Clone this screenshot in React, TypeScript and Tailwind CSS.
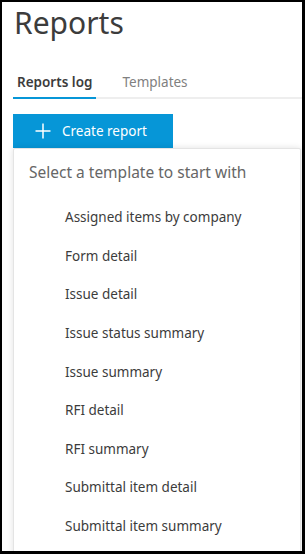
const templates = [
  "Assigned items by company",
  "Form detail",
  "Issue detail",
  "Issue status summary",
  "Issue summary",
  "RFI detail",
  "RFI summary",
  "Submittal item detail",
  "Submittal item summary",
];

const App = () => {
  return (
    <div className="w-[305px] h-[554px] overflow-hidden bg-black pl-[2px] pt-[2px] pr-[3px] pb-[3px]">
      <div className="h-full bg-white overflow-hidden font-['Noto_Sans',sans-serif]">
        {/* Title */}
        <h1 className="pl-[12px] text-[30px] leading-[41px] text-[#3c3c3c]">Reports</h1>

        {/* Tabs */}
        <div className="ml-[11px] mt-[29px] flex border-b-2 border-[#eeeeee]">
          <div className="-mb-[2px] border-b-2 border-[#0696d7] px-[4px] pb-[5px] text-[13.5px] leading-[20px] font-semibold text-[#3c3c3c]">
            Reports log
          </div>
          <div className="ml-[22px] px-[4px] pb-[5px] text-[13.5px] leading-[20px] text-[#808080]">
            Templates
          </div>
        </div>

        {/* Button */}
        <button className="ml-[11px] mt-[15px] flex h-[34px] w-[160px] items-center bg-[#0696d7] pl-[22px] text-[13.5px] text-white">
          <svg width="16" height="16" viewBox="0 0 16 16" fill="none" stroke="white" strokeWidth="1.5">
            <path d="M8 0.5v15M0.5 8h15" />
          </svg>
          <span className="ml-[11px]">Create report</span>
        </button>

        {/* Dropdown panel */}
        <div className="ml-[11px] w-[288px] h-[420px] rounded-[2px] border border-[#e4e4e4] bg-white shadow-[0_0_6px_rgba(0,0,0,0.12)]">
          <div className="pl-[15px] pt-[12px] text-[15.5px] leading-[22px] text-[#666666]">
            Select a template to start with
          </div>
          <div className="mt-[15px] flex flex-col">
            {templates.map((t) => (
              <div key={t} className="flex h-[38.6px] items-center pl-[51px] text-[13.5px] text-[#3c3c3c]">
                {t}
              </div>
            ))}
          </div>
        </div>
      </div>
    </div>
  );
};

export default App;
